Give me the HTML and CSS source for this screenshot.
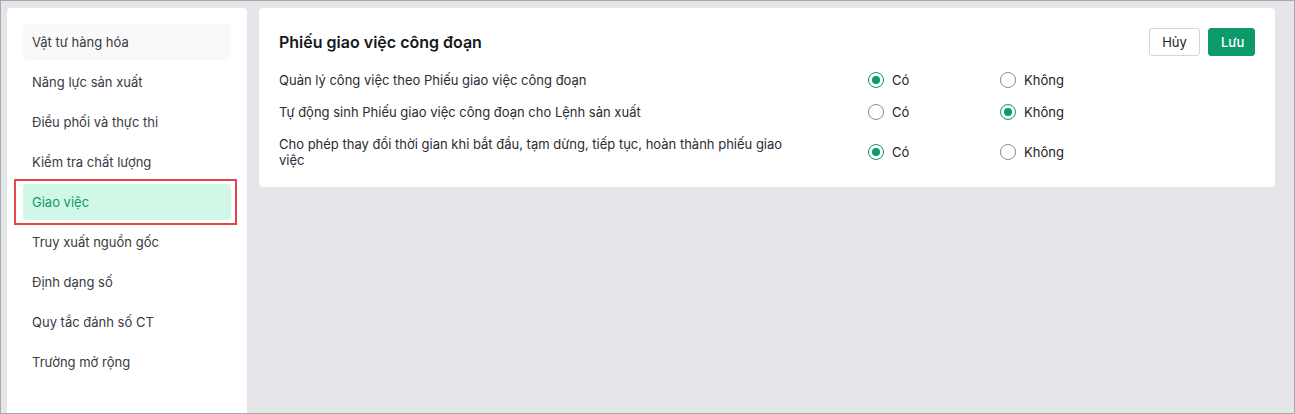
FILE: index.html
```html
<!DOCTYPE html>
<html lang="vi">
<head>
    <meta charset="UTF-8">
    <title>Thiết lập - Giao việc</title>
    <link rel="stylesheet" href="styles.css">
</head>
<body>
    <div class="frame">
        <aside class="sidebar">
            <div class="menu-item hovered">Vật tư hàng hóa</div>
            <div class="menu-item">Năng lực sản xuất</div>
            <div class="menu-item">Điều phối và thực thi</div>
            <div class="menu-item">Kiểm tra chất lượng</div>
            <div class="menu-item active">Giao việc</div>
            <div class="menu-item">Truy xuất nguồn gốc</div>
            <div class="menu-item">Định dạng số</div>
            <div class="menu-item">Quy tắc đánh số CT</div>
            <div class="menu-item">Trường mở rộng</div>
        </aside>

        <section class="panel">
            <div class="panel-header">
                <h2>Phiếu giao việc công đoạn</h2>
                <div class="actions">
                    <button class="btn btn-cancel">Hủy</button>
                    <button class="btn btn-save">Lưu</button>
                </div>
            </div>

            <div class="setting-row">
                <div class="setting-label">Quản lý công việc theo Phiếu giao việc công đoạn</div>
                <div class="options">
                    <label class="option"><span class="radio checked"></span>Có</label>
                    <label class="option"><span class="radio"></span>Không</label>
                </div>
            </div>
            <div class="setting-row">
                <div class="setting-label">Tự động sinh Phiếu giao việc công đoạn cho Lệnh sản xuất</div>
                <div class="options">
                    <label class="option"><span class="radio"></span>Có</label>
                    <label class="option"><span class="radio checked"></span>Không</label>
                </div>
            </div>
            <div class="setting-row">
                <div class="setting-label">Cho phép thay đổi thời gian khi bắt đầu, tạm dừng, tiếp tục, hoàn thành phiếu giao việc</div>
                <div class="options">
                    <label class="option"><span class="radio checked"></span>Có</label>
                    <label class="option"><span class="radio"></span>Không</label>
                </div>
            </div>
        </section>
    </div>
</body>
</html>
```

FILE: styles.css
```css
/* Base */
* {
    box-sizing: border-box;
}

body {
    margin: 0;
    font-family: Inter, "Noto Sans", Arial, sans-serif;
    font-size: 13px;
    color: #1f2128;
}

.frame {
    display: flex;
    align-items: flex-start;
    gap: 12px;
    height: 414px;
    padding: 7px 19px 0 6px;
    border: 1px solid #a8a8a8;
    background: #e5e6ea;
}

/* Sidebar */
.sidebar {
    width: 240px;
    height: 100%;
    padding: 16px 16px 0;
    background: #fff;
    border-radius: 4px 4px 0 0;
    display: flex;
    flex-direction: column;
    gap: 4px;
}

.menu-item {
    position: relative;
    height: 36px;
    line-height: 36px;
    padding-left: 9px;
    border-radius: 4px;
    color: #383a42;
}

.menu-item.hovered {
    background: #f9f9f9;
}

.menu-item.active {
    background: #d1f8e6;
    color: #0b9b6c;
}

.menu-item.active::after {
    content: "";
    position: absolute;
    left: -9px;
    right: -6px;
    top: -5px;
    bottom: -5px;
    border: 2px solid #e64545;
}

/* Main panel */
.panel {
    flex: 1;
    background: #fff;
    border-radius: 4px;
    padding: 20px 20px 11px;
}

.panel-header {
    display: flex;
    align-items: center;
    justify-content: space-between;
    height: 28px;
    margin-bottom: 8px;
}

.panel-header h2 {
    margin: 0;
    font-size: 16px;
    font-weight: 600;
    color: #17181c;
}

.actions {
    display: flex;
    gap: 8px;
}

.btn {
    height: 28px;
    padding: 0 12px;
    border-radius: 3px;
    font-family: inherit;
    font-size: 13px;
    cursor: pointer;
}

.btn-cancel {
    width: 51px;
    background: #fff;
    border: 1px solid #d4d5d9;
    color: #1f2128;
}

.btn-save {
    width: 47px;
    background: #0c9a6b;
    border: 1px solid #0c9a6b;
    color: #fff;
    font-weight: 500;
}

/* Setting rows */
.setting-row {
    display: flex;
    align-items: center;
    padding: 8px 0;
    line-height: 16px;
}

.setting-label {
    width: 525px;
    margin-right: 64px;
    color: #2a2c33;
}

.options {
    display: flex;
}

.option {
    display: flex;
    align-items: center;
    width: 132px;
    gap: 8px;
    color: #1f2128;
}

.radio {
    width: 16px;
    height: 16px;
    border-radius: 50%;
    border: 1px solid #8c8c8c;
    display: flex;
    align-items: center;
    justify-content: center;
}

.radio.checked {
    border-color: #0c9a6b;
}

.radio.checked::before {
    content: "";
    width: 8px;
    height: 8px;
    border-radius: 50%;
    background: #0c9a6b;
}
```
